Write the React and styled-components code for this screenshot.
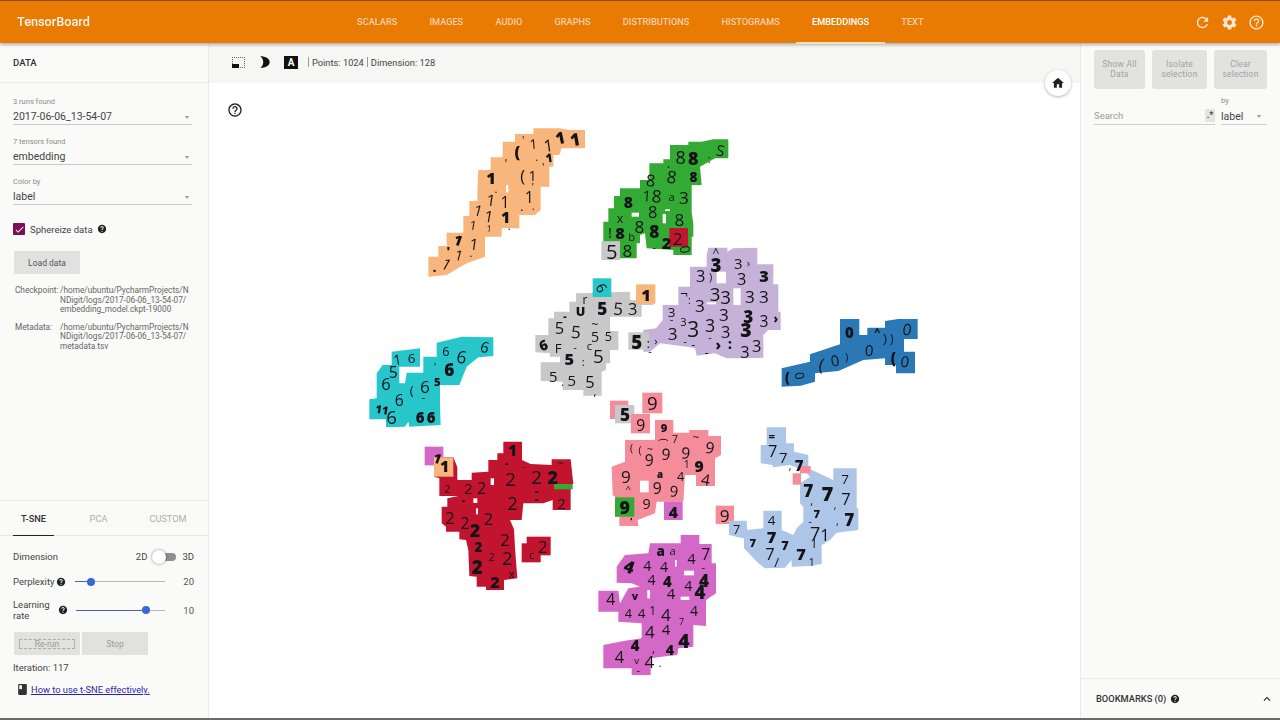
import React from "react";
import styled, { createGlobalStyle } from "styled-components";

const Global = createGlobalStyle`
  html, body { margin: 0; padding: 0; height: 100%; background: #fff; }
  body { font-family: Roboto, "Liberation Sans", sans-serif; color: #333; overflow: hidden; }
  #root { height: 100%; }
`;

/* ---------- Material icons ---------- */
const P = {
  refresh: "M17.65 6.35C16.2 4.9 14.21 4 12 4c-4.42 0-7.99 3.58-7.99 8s3.57 8 7.99 8c3.73 0 6.84-2.55 7.73-6h-2.08c-.82 2.33-3.04 4-5.65 4-3.31 0-6-2.69-6-6s2.69-6 6-6c1.66 0 3.14.69 4.22 1.78L13 11h7V4l-2.35 2.35z",
  settings: "M19.43 12.98c.04-.32.07-.64.07-.98s-.03-.66-.07-.98l2.11-1.65c.19-.15.24-.42.12-.64l-2-3.46c-.12-.22-.39-.3-.61-.22l-2.49 1c-.52-.4-1.08-.73-1.69-.98l-.38-2.65C14.46 2.18 14.25 2 14 2h-4c-.25 0-.46.18-.49.42l-.38 2.65c-.61.25-1.17.59-1.69.98l-2.49-1c-.23-.09-.49 0-.61.22l-2 3.46c-.13.22-.07.49.12.64l2.11 1.65c-.04.32-.07.65-.07.98s.03.66.07.98l-2.11 1.65c-.19.15-.24.42-.12.64l2 3.46c.12.22.39.3.61.22l2.49-1c.52.4 1.08.73 1.69.98l.38 2.65c.03.24.24.42.49.42h4c.25 0 .46-.18.49-.42l.38-2.65c.61-.25 1.17-.59 1.69-.98l2.49 1c.23.09.49 0 .61-.22l2-3.46c.12-.22.07-.49-.12-.64l-2.11-1.65zM12 15.5c-1.93 0-3.5-1.57-3.5-3.5s1.57-3.5 3.5-3.5 3.5 1.57 3.5 3.5-1.57 3.5-3.5 3.5z",
  helpOutline: "M11 18h2v-2h-2v2zm1-16C6.48 2 2 6.48 2 12s4.48 10 10 10 10-4.48 10-10S17.52 2 12 2zm0 18c-4.41 0-8-3.59-8-8s3.59-8 8-8 8 3.59 8 8-3.59 8-8 8zm0-14c-2.21 0-4 1.79-4 4h2c0-1.1.9-2 2-2s2 .9 2 2c0 2-3 1.75-3 5h2c0-2.25 3-2.5 3-5 0-2.21-1.79-4-4-4z",
  help: "M12 2C6.48 2 2 6.48 2 12s4.48 10 10 10 10-4.48 10-10S17.52 2 12 2zm1 17h-2v-2h2v2zm2.07-7.75l-.9.92C13.45 12.9 13 13.5 13 15h-2v-.5c0-1.1.45-2.1 1.17-2.83l1.24-1.26c.37-.36.59-.86.59-1.41 0-1.1-.9-2-2-2s-2 .9-2 2H8c0-2.21 1.79-4 4-4s4 1.79 4 4c0 .88-.36 1.68-.93 2.25z",
  home: "M10 20v-6h4v6h5v-8h3L12 3 2 12h3v8z",
  book: "M18 2H6c-1.1 0-2 .9-2 2v16c0 1.1.9 2 2 2h12c1.1 0 2-.9 2-2V4c0-1.1-.9-2-2-2zM6 4h5v8l-2.5-1.5L6 12V4z",
  up: "M12 8l-6 6 1.41 1.41L12 10.83l4.59 4.58L18 14z",
  check: "M9 16.2L4.8 12l-1.4 1.4L9 19 21 7l-1.4-1.4z",
  moon: "M4 2 C13 2 20 6 20 12 C20 18 13 22 4 22 C8 19 9 15 9 12 C9 9 8 5 4 2Z",
};
const Icon = ({ name, size = 16, color = "currentColor" }) => (
  <svg width={size} height={size} viewBox="0 0 24 24" fill={color} style={{ flex: "none", display: "block" }}>
    <path d={P[name]} />
  </svg>
);

/* ---------- Top bar ---------- */
const Page = styled.div`
  height: 100%;
  box-sizing: border-box;
  display: flex;
  flex-direction: column;
  border-top: 1px solid #8a4d08;
  border-bottom: 2px solid #6a6a6a;
`;
const TopBar = styled.header`
  height: 42px;
  flex: none;
  display: flex;
  align-items: stretch;
  background: #e97a02;
  box-shadow: 0 2px 3px rgba(0, 0, 0, 0.28);
  position: relative;
  z-index: 2;
`;
const Brand = styled.div`
  width: 341px;
  box-sizing: border-box;
  padding: 0 0 2px 17px;
  display: flex;
  align-items: center;
  color: #fff;
  font-size: 12.7px;
  font-weight: 500;
  opacity: 0.92;
`;
const Tabs = styled.nav`
  display: flex;
  flex: 1;
`;
const Tab = styled.div`
  padding: 0 16.1px;
  display: flex;
  align-items: center;
  font-size: 9.2px;
  font-weight: 500;
  color: ${(p) => (p.$active ? "#fff" : "rgba(255,255,255,0.66)")};
  border-bottom: 2px solid ${(p) => (p.$active ? "#f6dcc0" : "transparent")};
  margin-bottom: -1px;
`;
const TopIcons = styled.div`
  display: flex;
  align-items: center;
  gap: 10px;
  padding-right: 15px;
  color: #fbe6cf;
`;

/* ---------- Body ---------- */
const Body = styled.main`
  flex: 1;
  min-height: 0;
  display: flex;
`;
const LeftPanel = styled.aside`
  width: 208px;
  flex: none;
  display: flex;
  flex-direction: column;
  justify-content: space-between;
  background: #fafaf8;
  border-right: 1px solid #ebebe9;
`;
const PanelHead = styled.div`
  height: 40px;
  box-sizing: border-box;
  padding-left: 13px;
  display: flex;
  align-items: center;
  font-size: 9.6px;
  font-weight: 500;
  color: #333;
  border-bottom: 1px solid #ececea;
`;
const Fields = styled.div`
  padding: 14px 16px 0 13px;
`;
const Field = styled.div`
  height: 40px;
  box-sizing: border-box;
`;
const FieldLabel = styled.div`
  font-size: 7.5px;
  line-height: 10px;
  color: #8c8c8c;
`;
const FieldValue = styled.div`
  margin-top: 2px;
  height: 15px;
  display: flex;
  align-items: center;
  justify-content: space-between;
  padding-right: 3px;
  font-size: 10.5px;
  color: #444;
  border-bottom: 1px solid #c9c9c9;
`;
const Caret = styled.span`
  width: 0;
  height: 0;
  border-left: 2.8px solid transparent;
  border-right: 2.8px solid transparent;
  border-top: 3px solid #9a9a9a;
  margin-top: 1px;
`;
const CheckRow = styled.label`
  margin-top: 6px;
  display: flex;
  align-items: center;
  gap: 5px;
  font-size: 9.5px;
  color: #444;
`;
const CheckBox = styled.span`
  width: 12px;
  height: 12px;
  background: #7b0f53;
  border-radius: 1px;
  display: flex;
  align-items: center;
  justify-content: center;
`;
const HelpNudge = styled.span`
  margin-left: ${(p) => p.$ml || 0}px;
  display: block;
`;
const GreyButton = styled.div`
  width: ${(p) => p.$w || 66}px;
  height: 23px;
  background: #e1e1df;
  display: flex;
  align-items: center;
  justify-content: center;
  font-size: 8.5px;
  color: ${(p) => (p.$dim ? "#999" : "#555")};
`;
const LoadWrap = styled.div`
  margin: 16px 0 0 1px;
`;
const InfoGrid = styled.div`
  margin: 12px 0 0 2px;
  display: grid;
  grid-template-columns: 45px 131px;
  row-gap: 8px;
  font-size: 8.25px;
  line-height: 9.5px;
  color: #666;
`;
const Path = styled.div`
  white-space: nowrap;
`;
const Lower = styled.section`
  border-top: 1px solid #ececea;
  height: 218px;
  box-sizing: border-box;
`;
const SubTabs = styled.div`
  height: 34px;
  padding-left: 13px;
  display: flex;
  gap: 24px;
  border-bottom: 1px solid #e4e4e2;
`;
const SubTab = styled.div`
  width: ${(p) => p.$w || 41}px;
  display: flex;
  align-items: center;
  justify-content: center;
  font-size: 9.2px;
  margin-bottom: -1px;
  color: ${(p) => (p.$active ? "#333" : "#aeaeae")};
  font-weight: ${(p) => (p.$active ? 500 : 400)};
  border-bottom: ${(p) => (p.$active ? "1.5px solid #222" : "1.5px solid transparent")};
`;
const Controls = styled.div`
  padding: 8px 14px 0 13px;
  font-size: 9.5px;
  color: #444;
`;
const CtlRow = styled.div`
  display: flex;
  align-items: center;
  height: ${(p) => p.$h || 25}px;
  gap: 3px;
`;
const CtlLabel = styled.div`
  width: ${(p) => p.$w}px;
  line-height: 11px;
  flex: none;
`;
const Grow = styled.div`
  flex: 1;
`;
const Toggle = styled.div`
  width: 22px;
  height: 8px;
  border-radius: 4px;
  background: #8e8e8e;
  position: relative;
  margin: 1px 3px 0 4px;
`;
const ToggleKnob = styled.span`
  position: absolute;
  left: -2px;
  top: -3px;
  width: 14px;
  height: 14px;
  border-radius: 50%;
  background: #fff;
  box-shadow: 0 0 3px rgba(0, 0, 0, 0.45);
`;
const Slider = styled.div`
  position: relative;
  height: 1px;
  background: #b8b8b8;
  width: ${(p) => p.$w}px;
  margin-left: ${(p) => p.$ml || 0}px;
`;
const SliderFill = styled.div`
  height: 1px;
  background: #4a63b8;
`;
const Thumb = styled.span`
  position: absolute;
  top: -3.5px;
  width: 8px;
  height: 8px;
  margin-left: -4px;
  border-radius: 50%;
  background: #3b66d6;
`;
const SliderVal = styled.div`
  width: 22px;
  text-align: right;
  color: #555;
  flex: none;
`;
const Buttons = styled.div`
  display: flex;
  gap: 2px;
  margin: 6px 0 0 1px;
`;
const Dashed = styled.span`
  border: 1px dashed #aaa;
  padding: 0 15px;
  line-height: 8px;
  height: 8px;
  display: inline-block;
`;
const Iter = styled.div`
  margin-top: 7px;
  line-height: 12px;
`;
const LinkRow = styled.div`
  margin: 9px 0 0 3px;
  display: flex;
  align-items: center;
  gap: 2px;
  color: #444;
`;
const Link = styled.a`
  color: #2a1fae;
  text-decoration: underline;
  font-size: 9.3px;
`;

/* ---------- Centre ---------- */
const Centre = styled.div`
  flex: 1;
  min-width: 0;
  display: flex;
  flex-direction: column;
  position: relative;
`;
const ToolBar = styled.div`
  height: 40px;
  flex: none;
  box-sizing: border-box;
  display: flex;
  align-items: center;
  padding: 0 0 2px 21px;
  background: #f6f6f5;
  font-size: 9.3px;
  color: #444;
`;
const ToolIcon = styled.span`
  width: 16px;
  height: 16px;
  margin-right: ${(p) => p.$mr}px;
  display: flex;
  align-items: center;
  justify-content: center;
`;
const SelBox = styled.span`
  width: 13px;
  height: 11px;
  box-sizing: border-box;
  border: 1px dotted #666;
  position: relative;
`;
const SelFill = styled.span`
  position: absolute;
  left: -1px;
  bottom: -1px;
  width: 7px;
  height: 4px;
  background: #111;
`;
const LabelA = styled.span`
  width: 14px;
  height: 13px;
  background: #111;
  color: #fff;
  font-size: 10px;
  font-weight: 700;
  display: flex;
  align-items: center;
  justify-content: center;
`;
const Sep = styled.span`
  border-left: 1px solid #999;
  height: 10px;
  margin: 0 3px 0 ${(p) => p.$ml || 3}px;
`;
const Canvas = styled.div`
  flex: 1;
  min-height: 0;
  position: relative;
  background: #fff;
  overflow: hidden;
`;
const Plot = styled.svg`
  display: block;
  width: 100%;
  height: 100%;
  filter: blur(0.35px);
`;
const HomeFab = styled.div`
  position: absolute;
  top: 27px;
  right: 9px;
  width: 26px;
  height: 26px;
  border-radius: 50%;
  background: #fff;
  box-shadow: 0 1px 3px rgba(0, 0, 0, 0.3);
  display: flex;
  align-items: center;
  justify-content: center;
  color: #222;
  z-index: 1;
`;
const HelpBadge = styled.div`
  position: absolute;
  left: 18px;
  top: 19px;
  color: #222;
`;
const Ink = styled.text`
  font-family: "Open Sans", "DejaVu Sans", sans-serif;
  font-weight: ${(p) => (p.$bold ? 800 : 500)};
  fill: #141418;
  text-anchor: middle;
  dominant-baseline: central;
`;

/* ---------- Right ---------- */
const RightPanel = styled.aside`
  width: 200px;
  flex: none;
  display: flex;
  flex-direction: column;
  justify-content: space-between;
  background: #fafaf8;
  border-left: 1px solid #ebebe9;
  box-sizing: border-box;
`;
const Actions = styled.div`
  display: flex;
  gap: 7px;
  padding: 7px 13px 0 13px;
`;
const ActionBtn = styled.div`
  width: ${(p) => p.$w}px;
  height: 39px;
  flex: none;
  border-radius: 3px;
  background: #e2e2e0;
  color: #a3a3a3;
  font-size: 8.5px;
  line-height: 9.5px;
  letter-spacing: 0.2px;
  text-align: center;
  display: flex;
  align-items: center;
  justify-content: center;
`;
const SearchRow = styled.div`
  margin-top: 7px;
  padding: 0 13px;
  display: flex;
  gap: 6px;
  align-items: flex-end;
`;
const SearchBox = styled.div`
  width: 121px;
  height: 19px;
  box-sizing: border-box;
  display: flex;
  align-items: center;
  justify-content: space-between;
  font-size: 9.5px;
  color: #9a9a9a;
  border-bottom: 1px solid #cfcfcf;
`;
const Regex = styled.span`
  width: 10px;
  height: 13px;
  background: #e4e4e2;
  color: #444;
  font-size: 9px;
  font-weight: 700;
  text-align: center;
  line-height: 12px;
`;
const ByCol = styled.div`
  flex: 1;
`;
const ByLabel = styled.div`
  font-size: 7.5px;
  line-height: 10px;
  color: #8c8c8c;
  margin-bottom: 2px;
`;
const BySel = styled.div`
  display: flex;
  align-items: center;
  justify-content: space-between;
  height: 16px;
  padding-right: 6px;
  font-size: 10.5px;
  color: #444;
  border-bottom: 1px solid #cfcfcf;
`;
const Bookmarks = styled.div`
  height: 40px;
  box-sizing: border-box;
  border-top: 1px solid #ececea;
  display: flex;
  align-items: center;
  padding: 0 6px 0 15px;
  gap: 4px;
  font-size: 9.3px;
  font-weight: 500;
  color: #333;
`;

/* ---------- Embedding scatter data (coordinates are 3x page pixels from an origin) ---------- */
const parse = (s) =>
  s.split(";").map((t) => {
    const [c, x, y, size, rot, b] = t.trim().split(" ");
    return { c, x: +x, y: +y, size: +(size || 48) * 1.12, rot: +(rot || 0), bold: b === "b" };
  });

const ORANGE = "#f8b67c", GREEN = "#33aa33", RED = "#c2142f", GREY = "#c8c8c8", TEAL = "#27c6cb",
  LILAC = "#c6b2d8", BLUE = "#2a78b6", PINK = "#f48c9a", PALE = "#adc6e8", MAGENTA = "#d368c6";

const clusters = [
  {
    o: [420, 120], color: ORANGE,
    pts: "25,410 55,410 55,378 80,378 80,338 130,338 130,288 148,288 148,243 172,243 172,212 175,150 212,150 212,112 248,112 248,65 285,65 285,42 340,42 340,25 420,25 448,30 495,30 495,85 425,85 418,105 400,105 400,140 388,140 388,200 362,200 362,270 345,285 298,285 298,325 245,325 245,350 195,350 195,410 140,430 105,450 80,465 25,470",
    holes: [[258, 195, 7, 22]],
    ink: "1 420 52 44 -12 b;1 465 58 46 -10 b;1 385 75 44 -8;1 340 72 36 -5;' 310 58 30;( 292 90 44 0 b;1 387 112 32 -8 b;' 258 128 34;. 350 108 30;' 370 138 30;1 213 172 44 0 b;( 308 165 44;1 338 165 38;' 338 198 30;. 228 205 30;1 213 240 42 8;1 255 245 42;1 328 232 42;. 305 258 36;. 340 255 30;1 175 270 40 15;1 207 288 42 10;1 257 292 42 0 b;1 160 315 34 10;1 207 325 24 5;. 268 315 30;1 115 360 38 20 b;1 162 372 42 8;' 85 392 34 0 b;1 117 405 38 15;. 153 397 30;1 80 432 42 30;. 44 442 34 0 b",
  },
  {
    o: [420, 120], color: GREEN,
    pts: "750,75 805,75 805,65 845,65 880,58 925,58 925,115 885,115 840,140 845,195 815,195 815,278 820,310 820,350 815,350 815,405 760,405 760,390 680,385 675,340 660,345 660,370 650,370 650,415 600,415 600,365 550,365 550,305 565,305 565,265 582,265 582,228 600,228 600,205 660,205 660,180 688,180 688,130 730,130 730,118 750,118",
    holes: [[635, 278, 22, 12], [728, 282, 10, 28], [735, 268, 15, 5]],
    tiles: [{ x: 544, y: 364, w: 56, h: 56, color: GREY }, { x: 748, y: 324, w: 56, h: 56, color: RED }],
    ink: "8 782 112 48;8 820 114 48 0 b;S 902 90 40 10;: 868 115 30;8 692 180 44 5;8 755 170 46 8;8 820 172 36 0 b;. 745 130 34;8 625 245 42 0 b;8 710 228 46 5;a 755 228 30;3 792 232 46;1 680 226 40 5;8 698 275 44;x 600 295 34;8 778 298 46;8 600 336 44 0 b;! 570 335 40;8 658 318 46;8 703 335 46 0 b;b 635 350 30;2 740 368 44 0 b;2 773 355 46;0 795 388 36 80;- 703 378 30;5 575 392 54;8 622 392 46",
  },
  {
    o: [530, 245], color: LILAC,
    pts: "535,8 592,8 592,20 610,10 682,8 682,58 730,58 730,118 745,118 745,200 752,200 752,255 715,255 700,270 700,338 645,340 590,340 555,325 500,332 495,310 470,305 390,295 360,320 340,320 340,255 378,250 398,225 398,180 445,180 445,125 480,125 480,65 530,65 530,30",
    holes: [[560, 80, 28, 35], [610, 130, 22, 50], [530, 172, 28, 6]],
    tiles: [{ x: 295, y: 262, w: 62, h: 52, color: GREY }],
    ink: "^ 558 22 32;3 558 58 50 0 b;3 625 55 40;› 655 52 30;3 512 92 44;) 542 95 30;3 635 100 44;3 702 90 44 0 b;¬ 462 145 36;: 478 165 28;3 555 145 50;3 587 155 50;3 660 155 46;3 702 155 46;3 510 182 46;3 582 208 46;3 655 215 46 0 b;3 702 228 42;› 738 220 32 0 b;3 425 200 36;- 425 220 30;3 460 228 30;3 428 265 46;3 490 252 56;3 540 240 48;3 587 258 44;3 648 252 52 0 b;5 320 290 50 0 b;: 355 295 36;› 378 285 30;- 360 315 30;- 465 285 30;- 540 275 30;- 530 322 36;- 490 298 34;› 565 298 38 0 b;: 600 298 36 0 b;3 645 318 44;3 680 300 44",
  },
  {
    o: [530, 245], color: GREY,
    pts: "138,145 300,140 300,165 370,165 370,180 335,180 335,215 240,215 240,258 265,258 265,315 240,315 240,355 228,355 228,375 215,380 215,452 160,452 160,435 98,435 98,410 32,408 32,352 90,352 90,335 60,335 60,325 16,322 16,270 55,270 55,220 72,220 72,200 118,200 118,170 138,170",
    tiles: [{ x: 188, y: 100, w: 56, h: 56, color: TEAL }, { x: 318, y: 118, w: 58, h: 58, color: ORANGE }],
    ink: "6 215 128 38 60;1 348 148 44 0 b;5 217 190 46 0 b;5 265 190 46 5;3 308 190 44;r 165 162 32;U 152 198 34 0 b;- 105 214 28 0 b;5 88 248 44;5 138 260 46 5;~ 195 238 32;5 195 275 38;5 235 272 34;6 40 300 38 -20 b;F 85 310 36;- 135 303 30;c 178 300 30;5 118 340 44 0 b;: 160 348 30;5 205 330 50;5 70 392 40;. 98 410 28;5 125 405 40;5 180 410 44;, 195 440 30",
  },
  {
    o: [530, 245], color: BLUE,
    pts: "930,222 988,222 988,270 1012,270 1012,248 1065,248 1065,228 1105,222 1163,222 1163,282 1122,282 1122,320 1155,320 1155,385 1098,385 1098,360 1065,360 1065,340 1000,345 925,378 855,385 855,410 812,422 755,425 755,370 840,350 840,328 930,298 930,285",
    ink: "0 958 260 40 0 b;0 1132 252 42 10;) 1065 280 36;) 1085 280 32;^ 1042 262 28 0 b;0 1018 315 40 5;( 1090 335 40 0 b;0 1125 348 40 10;( 875 358 46 10;0 915 345 40 -10;) 950 335 30;( 772 395 36 0 b;0 810 392 34 80",
  },
  {
    o: [360, 330], color: TEAL,
    pts: "230,38 305,20 400,22 400,78 355,82 320,110 298,165 240,165 240,230 242,285 148,290 145,275 135,290 78,292 78,268 28,268 28,208 50,205 50,130 68,105 95,105 95,65 180,55 180,110 118,110 118,160 135,160 140,128 190,128 190,80 230,80",
    ink: "6 375 50 40 15;6 305 80 46 10;6 258 62 34;6 268 118 46 0 b;6 155 85 36;1 112 88 38 -10;5 100 125 42;6 78 160 44;6 118 210 42;6 195 170 46;( 155 180 36;5 232 155 30 0 b;' 225 110 30;6 95 260 50;11 66 238 30 10 b;6 180 262 40 0 b;6 213 262 40 0 b;- 190 200 30",
  },
  {
    o: [360, 330], color: RED,
    pts: "430,335 486,335 486,390 512,402 575,405 575,388 632,388 640,462 632,462 632,540 578,540 578,510 550,520 490,520 485,570 450,570 462,598 465,655 472,745 432,750 432,780 378,780 378,770 350,770 350,740 328,738 325,660 318,630 298,628 298,605 258,605 258,590 245,580 245,530 262,530 262,505 295,498 238,498 238,445 222,440 222,382 280,382 292,412 292,450 335,450 335,428 385,425 385,390 412,390 412,370 430,370",
    holes: [[392, 445, 10, 20], [340, 505, 12, 14], [348, 535, 6, 18]],
    tiles: [
      { x: 194, y: 350, w: 56, h: 56, color: MAGENTA },
      { x: 222, y: 382, w: 58, h: 58, color: ORANGE },
      { x: 582, y: 462, w: 56, h: 16, color: GREEN },
      { x: 500, y: 620, w: 72, h: 56, color: RED },
      { x: 485, y: 640, w: 57, h: 57, color: RED },
    ],
    ink: "1 458 360 40 0 b;2 452 445 50;2 530 440 50;2 578 440 48 0 b;~ 602 400 28;2 325 475 40;2 365 475 42;2 262 475 30;2 458 520 48;2 605 520 38;1 232 385 36 20 b;1 254 408 42 0 b;2 270 562 44;2 315 578 42;2 385 565 44;2 345 600 48 0 b;2 435 628 44;2 355 650 36 0 b;2 395 678 30;2 442 682 50;2 352 708 50 0 b;x 455 730 30;2 405 755 44 0 b;2 548 648 46;c 515 675 28;- 440 400 28 0 b;- 490 410 26;- 530 480 30 0 b;- 530 505 30 0 b;- 310 510 28 0 b",
  },
  {
    o: [590, 390], color: PINK,
    pts: "195,90 250,90 250,128 298,128 298,120 355,120 355,138 393,138 393,195 375,205 375,288 318,288 318,255 285,255 280,335 200,335 195,370 143,390 145,408 88,408 88,380 75,380 75,320 68,315 65,230 105,215 105,150 195,150",
    holes: [[150, 272, 26, 35]],
    tiles: [
      { x: 157, y: 8, w: 60, h: 62, color: PINK },
      { x: 60, y: 32, w: 55, h: 55, color: PINK },
      { x: 75, y: 45, w: 58, h: 55, color: GREY },
      { x: 123, y: 72, w: 57, h: 58, color: PINK },
      { x: 75, y: 322, w: 58, h: 58, color: GREEN },
      { x: 222, y: 335, w: 56, h: 55, color: MAGENTA },
      { x: 377, y: 347, w: 55, h: 55, color: PINK },
    ],
    ink: "9 187 38 50;5 105 72 46 0 b;9 152 105 42;9 222 112 30 0 b;( 222 150 30 90;7 255 148 28;~ 318 138 30;9 360 172 42 10;( 125 175 28;( 150 180 28;~ 180 178 28;9 178 210 42;9 228 192 42 5;9 287 188 42 5;1 290 222 28;9 327 228 42 0 b;9 108 258 46;a 210 252 26 0 b;4 272 258 34;4 347 268 42 10;9 202 295 42;9 252 302 40 5;^ 115 295 26;9 104 350 48 0 b;9 170 340 38;4 250 365 42 0 b;9 404 376 46 0;' 124 392 24 0 b",
  },
  {
    o: [590, 390], color: PALE,
    pts: "530,112 588,112 588,160 612,160 612,185 655,195 655,235 730,270 730,235 800,235 800,355 805,355 805,420 740,428 720,450 695,465 695,522 660,528 605,530 605,510 585,533 525,535 505,520 462,475 462,445 445,442 417,435 417,392 470,392 472,420 520,415 520,362 575,362 575,420 610,435 620,415 640,395 640,350 630,340 630,280 660,260 640,240 600,225 548,232 548,225 512,220 512,165 530,165",
    tiles: [{ x: 608, y: 250, w: 25, h: 34, color: PINK }, { x: 630, y: 228, w: 32, h: 22, color: PINK }],
    ink: "= 545 135 30 0 b;7 548 182 44;7 580 200 40;, 600 228 28;7 627 225 40 0 b;7 765 268 36;7 655 300 46 0 b;7 712 310 54 0 b;7 768 325 44;, 735 345 28;, 665 330 30;7 680 370 30 0 b;7 778 388 46 0 b;- 660 392 30;, 742 392 28;7 675 430 48;1 705 432 44;7 440 418 34;7 488 458 30 0 b;4 545 390 36;7 545 438 44 0 b;7 585 465 34 0 b;7 540 490 44;/ 560 515 36;7 633 490 44 0 b;1 672 460 34;1 665 515 30",
  },
  {
    o: [590, 390], color: MAGENTA,
    pts: "272,435 328,435 328,462 365,462 365,520 378,520 378,610 348,630 348,708 310,705 310,770 265,775 262,795 215,800 182,805 182,855 125,855 125,835 40,835 40,765 105,752 155,745 155,700 85,695 85,665 25,665 25,602 85,602 90,640 115,595 150,590 125,580 80,578 80,530 105,495 175,490 180,460 272,460",
    holes: [[282, 542, 30, 14], [272, 620, 26, 10], [172, 600, 8, 25], [255, 510, 5, 20]],
    ink: "a 212 482 36 0 b;a 248 482 30;4 305 505 38;7 347 492 42;4 118 530 46 20 b;4 172 525 38;4 222 528 38;- 340 530 30;4 185 568 38;4 232 572 40 0 b;4 295 585 38;4 342 570 46 0 b;4 62 628 42;v 135 618 28 0 b;4 243 610 40;4 330 605 50 0 b;4 115 670 34;4 155 670 36;1 188 660 32;4 228 672 46;4 312 662 38;7 275 695 24;4 180 725 46;4 228 718 40;4 282 750 52 0 b;4 135 765 40 0 b;, 190 775 30;4 240 778 38 0 b;4 88 798 44;v 140 810 26;4 178 815 46;. 210 818 28;- 145 838 30",
  },
];

const Cluster = ({ o, color, pts, holes = [], tiles = [], ink }) => (
  <g transform={`translate(${o[0]} ${o[1]}) scale(${1 / 3})`}>
    <polygon points={pts} fill={color} />
    {holes.map(([x, y, w, h], i) => (
      <rect key={i} x={x} y={y} width={w} height={h} fill="#fff" />
    ))}
    {tiles.map((t, i) => (
      <rect key={i} x={t.x} y={t.y} width={t.w} height={t.h} fill={t.color} />
    ))}
    {parse(ink).map((d, i) => (
      <Ink key={i} $bold={d.bold} x={d.x} y={d.y} fontSize={d.size} transform={`rotate(${d.rot} ${d.x} ${d.y})`}>
        {d.c}
      </Ink>
    ))}
  </g>
);

const navTabs = ["SCALARS", "IMAGES", "AUDIO", "GRAPHS", "DISTRIBUTIONS", "HISTOGRAMS", "EMBEDDINGS", "TEXT"];

export default function App() {
  return (
    <Page>
      <Global />
      <TopBar>
        <Brand>TensorBoard</Brand>
        <Tabs>
          {navTabs.map((t) => (
            <Tab key={t} $active={t === "EMBEDDINGS"}>{t}</Tab>
          ))}
        </Tabs>
        <TopIcons>
          <Icon name="refresh" size={17} />
          <Icon name="settings" size={17} />
          <Icon name="helpOutline" size={17} />
        </TopIcons>
      </TopBar>
      <Body>
        <LeftPanel>
          <div>
            <PanelHead>DATA</PanelHead>
            <Fields>
              <Field>
                <FieldLabel>3 runs found</FieldLabel>
                <FieldValue>2017-06-06_13-54-07<Caret /></FieldValue>
              </Field>
              <Field>
                <FieldLabel>7 tensors found</FieldLabel>
                <FieldValue>embedding<Caret /></FieldValue>
              </Field>
              <Field>
                <FieldLabel>Color by</FieldLabel>
                <FieldValue>label<Caret /></FieldValue>
              </Field>
              <CheckRow>
                <CheckBox><Icon name="check" size={11} color="#fff" /></CheckBox>
                Sphereize data
                <HelpNudge $ml={-1}><Icon name="help" size={10} color="#222" /></HelpNudge>
              </CheckRow>
              <LoadWrap><GreyButton>Load data</GreyButton></LoadWrap>
              <InfoGrid>
                <div>Checkpoint:</div>
                <Path>/home/ubuntu/PycharmProjects/N<br />NDigit/logs/2017-06-06_13-54-07/<br />embedding_model.ckpt-19000</Path>
                <div>Metadata:</div>
                <Path>/home/ubuntu/PycharmProjects/N<br />NDigit/logs/2017-06-06_13-54-07/<br />metadata.tsv</Path>
              </InfoGrid>
            </Fields>
          </div>
          <Lower>
            <SubTabs>
              <SubTab $active>T-SNE</SubTab>
              <SubTab>PCA</SubTab>
              <SubTab $w={50}>CUSTOM</SubTab>
            </SubTabs>
            <Controls>
              <CtlRow $h={25}>
                <CtlLabel $w={60}>Dimension</CtlLabel>
                <Grow />
                2D<Toggle><ToggleKnob /></Toggle>3D
              </CtlRow>
              <CtlRow $h={25}>
                <CtlLabel $w={40}>Perplexity</CtlLabel>
                <Icon name="help" size={10} color="#222" />
                <Slider $w={90} $ml={6}>
                  <SliderFill style={{ width: "18%" }} />
                  <Thumb style={{ left: "18%" }} />
                </Slider>
                <Grow />
                <SliderVal>20</SliderVal>
              </CtlRow>
              <CtlRow $h={32}>
                <CtlLabel $w={42}>Learning rate</CtlLabel>
                <Icon name="help" size={10} color="#222" />
                <Slider $w={89} $ml={5}>
                  <SliderFill style={{ width: "79%" }} />
                  <Thumb style={{ left: "79%" }} />
                </Slider>
                <Grow />
                <SliderVal>10</SliderVal>
              </CtlRow>
              <Buttons>
                <GreyButton $dim><Dashed>Re-run</Dashed></GreyButton>
                <GreyButton $dim>Stop</GreyButton>
              </Buttons>
              <Iter>Iteration: 117</Iter>
              <LinkRow>
                <Icon name="book" size={13} color="#333" />
                <Link>How to use t-SNE effectively.</Link>
              </LinkRow>
            </Controls>
          </Lower>
        </LeftPanel>
        <Centre>
          <ToolBar>
            <ToolIcon $mr={11}><SelBox><SelFill /></SelBox></ToolIcon>
            <ToolIcon $mr={10}><Icon name="moon" size={14} color="#111" /></ToolIcon>
            <ToolIcon $mr={7}><LabelA>A</LabelA></ToolIcon>
            <Sep $ml={2} />Points: 1024<Sep />Dimension: 128
          </ToolBar>
          <Canvas>
            <Plot viewBox="209 83 871 633" preserveAspectRatio="xMinYMin meet">
              {clusters.map((c, i) => <Cluster key={i} {...c} />)}
            </Plot>
            <HelpBadge><Icon name="helpOutline" size={16} /></HelpBadge>
          </Canvas>
          <HomeFab><Icon name="home" size={14} /></HomeFab>
        </Centre>
        <RightPanel>
          <div>
            <Actions>
              <ActionBtn $w={51}>Show All<br />Data</ActionBtn>
              <ActionBtn $w={55}>Isolate<br />selection</ActionBtn>
              <ActionBtn $w={53}>Clear<br />selection</ActionBtn>
            </Actions>
            <SearchRow>
              <SearchBox>Search<Regex>.*</Regex></SearchBox>
              <ByCol>
                <ByLabel>by</ByLabel>
                <BySel>label<Caret /></BySel>
              </ByCol>
            </SearchRow>
          </div>
          <Bookmarks>
            BOOKMARKS (0)
            <Icon name="help" size={10} color="#222" />
            <Grow />
            <Icon name="up" size={14} color="#222" />
          </Bookmarks>
        </RightPanel>
      </Body>
    </Page>
  );
}
